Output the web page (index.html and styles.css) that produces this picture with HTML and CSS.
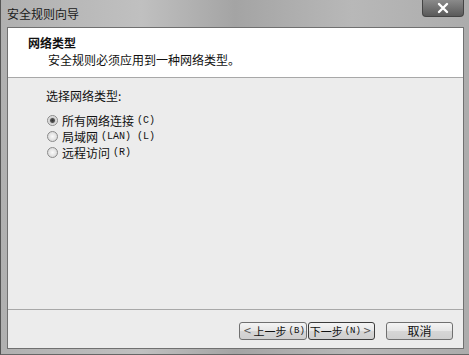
FILE: index.html
```html
<!DOCTYPE html>
<html lang="zh-CN">
<head>
  <meta charset="UTF-8">
  <title>安全规则向导</title>
  <link rel="stylesheet" href="styles.css">
</head>
<body>
  <div class="window">
    <div class="titlebar">
      <span class="title">安全规则向导</span>
      <div class="close">
        <svg width="14" height="12" viewBox="0 0 14 12">
          <path d="M3 2 L11 10 M11 2 L3 10" stroke="#fff" stroke-width="2.4" stroke-linecap="round"/>
        </svg>
      </div>
    </div>
    <div class="client">
      <div class="header">
        <div class="heading">网络类型</div>
        <div class="subheading">安全规则必须应用到一种网络类型。</div>
      </div>
      <div class="content">
        <div class="prompt">选择网络类型:</div>
        <label class="option"><span class="radio checked"></span>所有网络连接<span class="key">(C)</span></label>
        <label class="option"><span class="radio"></span>局域网<span class="key">(LAN) (L)</span></label>
        <label class="option"><span class="radio"></span>远程访问<span class="key">(R)</span></label>
      </div>
      <div class="footer">
        <button class="btn btn-back"><span class="arrow">&lt;</span>上一步<span class="key">(B)</span></button>
        <button class="btn btn-next">下一步<span class="key">(N)</span><span class="arrow">&gt;</span></button>
        <button class="btn btn-cancel">取消</button>
      </div>
    </div>
  </div>
</body>
</html>
```

FILE: styles.css
```css
body {
  margin: 0;
  font-family: "Noto Sans CJK SC", "DejaVu Sans", sans-serif;
  font-size: 12px;
  color: #111;
  background: #9a9a9a;
}
.window {
  width: 469px;
  height: 355px;
  box-sizing: border-box;
  padding: 0 5px 5px 6px;
  display: flex;
  flex-direction: column;
  background: linear-gradient(90deg, #b0b0b0 0%, #c0c0c0 30%, #a4a4a4 50%, #b8b8b8 75%, #acacac 100%);
  border-left: 1px solid #555;
  border-bottom: 1px solid #666;
}
.titlebar {
  height: 27px;
  display: flex;
  justify-content: space-between;
  align-items: flex-start;
}
.title {
  margin-top: 5px;
  color: #1a1a1a;
}
.close {
  width: 42px;
  height: 17px;
  display: flex;
  align-items: center;
  justify-content: center;
  background: linear-gradient(#8a8a8a, #5a5a5a);
  border: 1px solid #444;
  border-top: none;
  border-radius: 0 0 4px 4px;
  box-sizing: border-box;
}
.client {
  flex: 1;
  display: flex;
  flex-direction: column;
  border: 1px solid #707070;
  background: #ececec;
}
.header {
  height: 50px;
  box-sizing: border-box;
  padding: 6px 20px 0;
  background: #fff;
  border-bottom: 1px solid #a8a8a8;
}
.heading {
  font-weight: bold;
  line-height: 17px;
}
.subheading {
  padding-left: 20px;
  line-height: 17px;
}
.content {
  flex: 1;
  padding: 10px 38px 0;
  display: flex;
  flex-direction: column;
}
.prompt {
  line-height: 16px;
  margin-bottom: 8px;
}
.option {
  display: flex;
  align-items: center;
  height: 16px;
}
.radio {
  width: 9px;
  height: 9px;
  border: 1px solid #8a8a8a;
  border-radius: 50%;
  background: radial-gradient(#fafafa, #d0d0d0);
  margin: 0 4px 0 1px;
  box-sizing: content-box;
}
.radio.checked {
  background: radial-gradient(circle, #333 0, #555 2px, #cfcfcf 3px, #f0f0f0 5px);
}
.key {
  font-family: "Liberation Mono", monospace;
  font-size: 10px;
  margin-left: 3px;
}
.footer {
  height: 39px;
  box-sizing: border-box;
  border-top: 1px solid #a8a8a8;
  display: flex;
  justify-content: flex-end;
  align-items: flex-start;
  padding: 12px 10px 0 0;
}
.btn {
  height: 18px;
  padding: 0;
  font-family: inherit;
  font-size: 11px;
  color: #111;
  white-space: nowrap;
  border: 1px solid #707070;
  border-radius: 3px;
  background: linear-gradient(#f4f4f4 0%, #e6e6e6 50%, #d6d6d6 51%, #cfcfcf 100%);
  display: flex;
  align-items: center;
  justify-content: center;
  line-height: 1;
}
.btn .key {
  font-size: 9px;
  margin-left: 2px;
}
.arrow {
  font-family: "DejaVu Sans", sans-serif;
  font-size: 10px;
  color: #555;
  margin: 0 2px;
}
.btn-back {
  width: 68px;
}
.btn-next {
  width: 67px;
  margin-left: 1px;
  border-color: #3c3c3c;
}
.btn-cancel {
  width: 67px;
  margin-left: 11px;
  font-size: 12px;
}
```
